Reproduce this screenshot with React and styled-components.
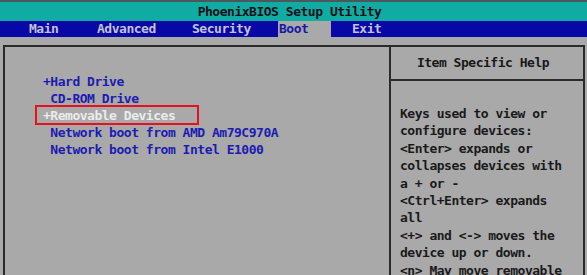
import React from 'react'
import styled, { createGlobalStyle } from 'styled-components'

const GlobalStyle = createGlobalStyle`
    html, body {
        margin: 0;
        padding: 0;
        background: #a9a9a9;
        overflow: hidden;
    }
`
const Screen = styled.div`
    width: 587px;
    height: 275px;
    overflow: hidden;
    background: #a9a9a9;
    font-family: 'DejaVu Sans Mono', 'Liberation Mono', monospace;
    font-size: 13px;
    letter-spacing: -0.48px;
    font-weight: bold;
    border-top: 2px solid #4a5a5a;
    box-sizing: border-box;
`
const TitleBar = styled.div`
    height: 19px;
    line-height: 19px;
    background: #10aca4;
    color: #101018;
    text-align: center;
    padding-right: 8px;
    white-space: pre;
`
const MenuBar = styled.div`
    display: flex;
    height: 16px;
    line-height: 16px;
    background: #0808a6;
    padding-left: 28px;
`
const Tab = styled.div`
    width: ${props => props.w ? props.w + 'px' : 'auto'};
    padding-left: ${props => props.pad}px;
    box-sizing: border-box;
    background: ${props => props.active ? '#a9a9a9' : 'transparent'};
    color: ${props => props.active ? '#1818a8' : '#c2c2d8'};
    white-space: pre;
`
const Frame = styled.div`
    display: flex;
    margin: 8px 2px 0 3px;
    height: 240px;
    border: 2px solid #2a2a2a;
    border-bottom: none;
`
const ItemList = styled.div`
    width: 386px;
    padding: 26px 0 0 38px;
    box-sizing: border-box;
    border-right: 2px solid #2a2a2a;
`
const Item = styled.div`
    position: relative;
    width: max-content;
    line-height: 17px;
    color: ${props => props.selected ? '#ececec' : '#1c1cb0'};
    white-space: pre;
    ${props => props.selected && `
        &::after {
            content: '';
            position: absolute;
            left: -8px;
            right: -24px;
            top: -2px;
            bottom: -1px;
            border: 2px solid #e8101c;
        }
    `}
`
const HelpPanel = styled.div`
    flex: 1;
    display: flex;
    flex-direction: column;
`
const HelpHeader = styled.div`
    height: 34px;
    box-sizing: border-box;
    padding-top: 7px;
    line-height: 17px;
    text-align: center;
    padding-right: 8px;
    color: #181818;
    border-bottom: 2px solid #2a2a2a;
`
const HelpText = styled.div`
    padding: 24px 0 0 9px;
    line-height: 17.4px;
    color: #1a1a1a;
    white-space: pre;
`

const tabs = [
    { label: 'Main', w: 68, pad: 1 },
    { label: 'Advanced', w: 95, pad: 1 },
    { label: 'Security', w: 87, pad: 1 },
    { label: 'Boot', w: 53, pad: 1, active: true },
    { label: 'Exit', pad: 21 },
]

const items = [
    { text: '+Hard Drive' },
    { text: ' CD-ROM Drive' },
    { text: '+Removable Devices', selected: true },
    { text: ' Network boot from AMD Am79C970A' },
    { text: ' Network boot from Intel E1000' },
]

const help = [
    'Keys used to view or',
    'configure devices:',
    '<Enter> expands or',
    'collapses devices with',
    'a + or -',
    '<Ctrl+Enter> expands',
    'all',
    '<+> and <-> moves the',
    'device up or down.',
    '<n> May move removable',
]

class App extends React.Component {
    render() {
        return (
            <Screen>
                <GlobalStyle/>
                <TitleBar>PhoenixBIOS Setup Utility</TitleBar>
                <MenuBar>
                    {tabs.map(tab => (
                        <Tab key={tab.label} w={tab.w} pad={tab.pad} active={tab.active}>{tab.label}</Tab>
                    ))}
                </MenuBar>
                <Frame>
                    <ItemList>
                        {items.map(item => (
                            <Item key={item.text} selected={item.selected}>{item.text}</Item>
                        ))}
                    </ItemList>
                    <HelpPanel>
                        <HelpHeader>Item Specific Help</HelpHeader>
                        <HelpText>{help.join('\n')}</HelpText>
                    </HelpPanel>
                </Frame>
            </Screen>
        )
    }
}

export default App
